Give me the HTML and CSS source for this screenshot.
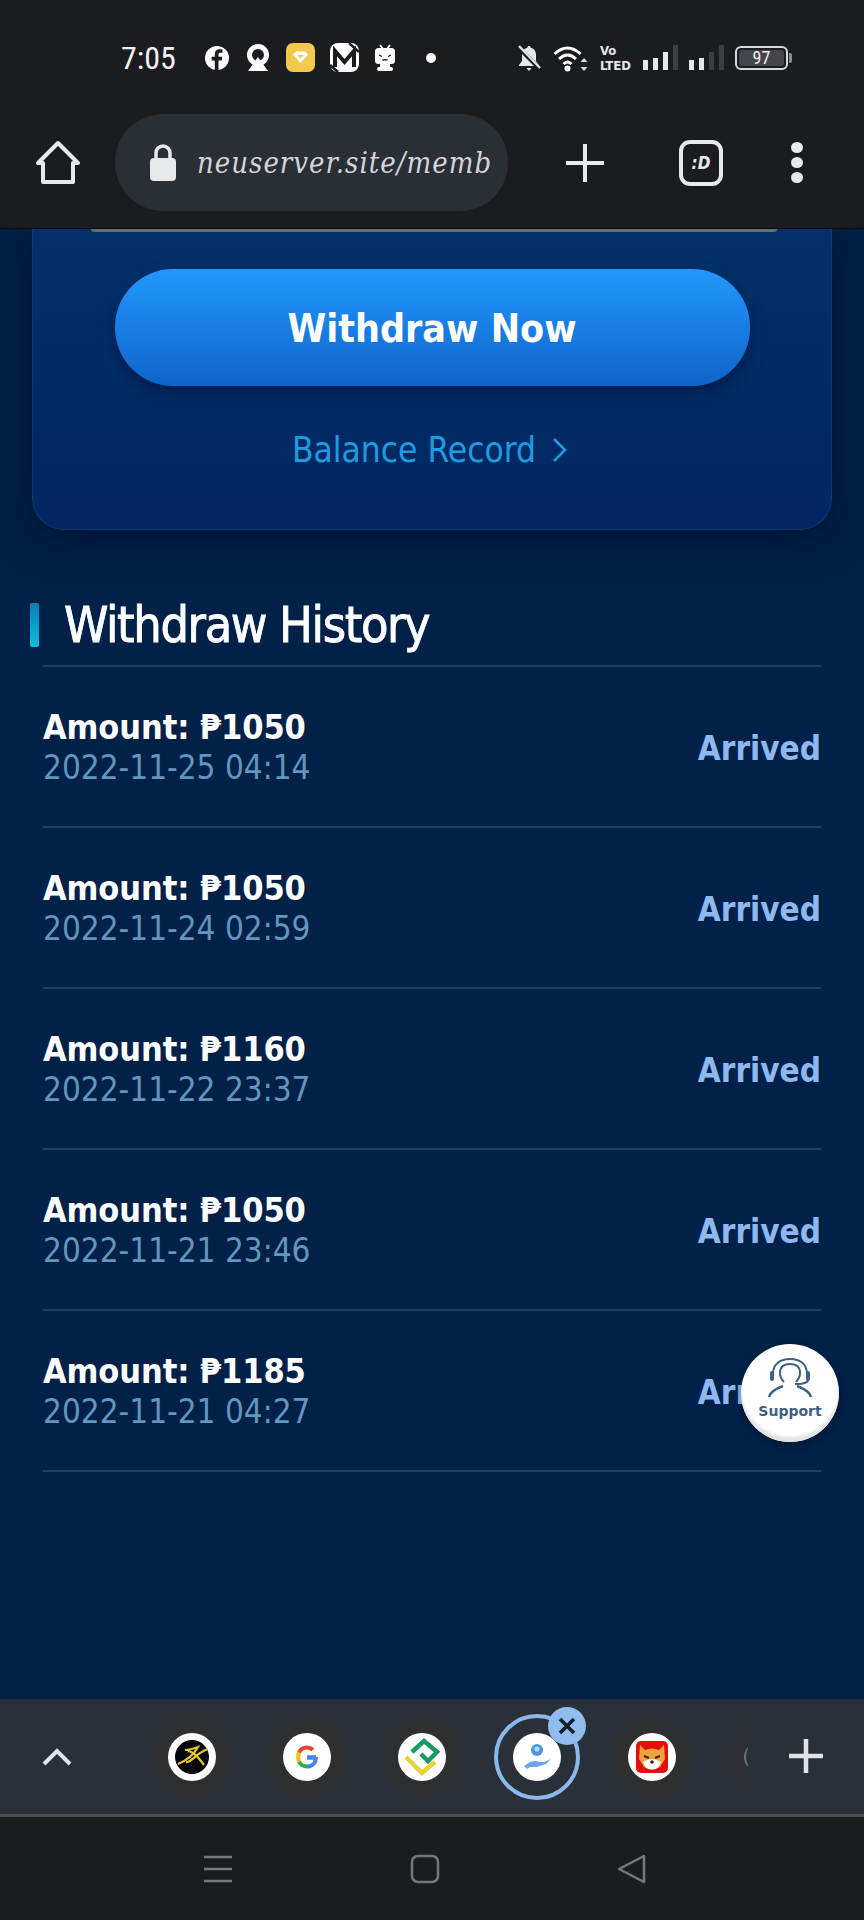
FILE: index.html
```html
<!DOCTYPE html>
<html lang="en">
<head>
  <meta charset="UTF-8" />
  <meta name="viewport" content="width=device-width, initial-scale=1.0"/>
  <title>Withdraw History</title>
  <link rel="stylesheet" href="styles.css">
</head>
<body>
  <div class="status-bar">
    <span class="clock">7:05</span>
    <div class="status-apps">
      <svg width="26" height="26" viewBox="0 0 26 26"><circle cx="13" cy="13" r="12" fill="#fff"/><path d="M14.500 25v-9.500h3.200l.5-3.700h-3.700V9.500c0-1.100.4-1.800 1.900-1.800h2V4.400c-.6-.1-1.700-.2-2.800-.2-2.900 0-4.800 1.700-4.800 4.800v2.800H7.600v3.700h3.200V25z" fill="#1b1c20"/></svg>
      <svg width="26" height="28" viewBox="0 0 26 28"><circle cx="13" cy="11" r="8.500" fill="none" stroke="#fff" stroke-width="5"/><path d="M13 13 23 27H3z" fill="#fff"/></svg>
      <svg width="29" height="29" viewBox="0 0 29 29"><rect width="29" height="29" rx="7" fill="#f2c94c"/><path d="M7 11.500 10 8.500h9l3 3-7.500 8.500z" fill="#fff"/><path d="M11 12h7l-3.500 3.500z" fill="#f2c94c"/></svg>
      <svg width="29" height="29" viewBox="0 0 29 29"><rect width="29" height="29" rx="8" fill="#fff"/><path d="M5 24V8l9.500 11L24 8v16" fill="none" stroke="#1b1c20" stroke-width="4"/><path d="M19 0 29 9M0 22l8 7" stroke="#1b1c20" stroke-width="2.500"/></svg>
      <svg width="22" height="27" viewBox="0 0 22 27"><path d="M6 1l3 4M16 1l-3 4" stroke="#fff" stroke-width="1.800"/><rect x="1" y="4" width="20" height="16" rx="3.500" fill="#fff"/><rect x="6" y="20" width="10" height="3" fill="#fff"/><rect x="3" y="23" width="16" height="4" rx="2" fill="#fff"/><path d="M5 11l3 1.500M17 11l-3 1.500M8.500 15.500q1.200 1 2.500 0q1.300 1 2.500 0" fill="none" stroke="#1b1c20" stroke-width="1.300"/></svg>
      <span class="status-dot"></span>
    </div>
    <div class="status-system">
      <svg width="26" height="28" viewBox="0 0 26 28"><path d="M13 2c-1 0-1.700.7-1.700 1.700C7.500 4.500 6 7.500 6 11v6l-3 4v1h20v-1l-3-4v-6c0-3.500-1.500-6.500-5.300-7.300C14.700 2.700 14 2 13 2z" fill="#e6e7ea"/><path d="M10.500 24h5l-2.500 3z" fill="#e6e7ea"/><path d="M2 3l22 22" stroke="#1b1c20" stroke-width="4.500"/><path d="M3 2l21 22" stroke="#e6e7ea" stroke-width="2.200"/></svg>
      <svg width="36" height="28" viewBox="0 0 36 28"><path d="M1.500 10q13-12 26 0M6 15q8.500-8 17 0M10.500 20q4-4 8 0" fill="none" stroke="#fff" stroke-width="3"/><circle cx="14.500" cy="24.500" r="3" fill="#fff"/><path d="M31 14l3.500 4h-7zM31 27l-3.500-4h7z" fill="#d9dadd"/></svg>
      <span class="volte">Vo<br>LTED</span>
      <svg width="35" height="26" viewBox="0 0 35 26"><rect x="0" y="15" width="5" height="10" fill="#e6e7ea"/><rect x="10" y="13" width="5" height="12" fill="#e6e7ea"/><rect x="20" y="7" width="5" height="18" fill="#e6e7ea"/><rect x="30" y="0" width="5" height="25" fill="#3c3e42"/></svg>
      <svg width="35" height="26" viewBox="0 0 35 26"><rect x="0" y="15" width="5" height="10" fill="#e6e7ea"/><rect x="10" y="13" width="5" height="12" fill="#e6e7ea"/><rect x="20" y="7" width="5" height="18" fill="#3c3e42"/><rect x="30" y="0" width="5" height="25" fill="#3c3e42"/></svg>
      <div class="battery"><span class="battery-level">97</span></div>
    </div>
  </div>

  <header class="toolbar">
    <svg class="home-icon" width="46" height="46" viewBox="0 0 46 46"><path d="M23 3 3 23h5v19h30V23h5z" fill="none" stroke="#e8e9ec" stroke-width="4" stroke-linejoin="round"/></svg>
    <div class="address">
      <svg class="lock-icon" width="28" height="38" viewBox="0 0 28 38"><path d="M7 16V9a7 7 0 0 1 14 0v7" fill="none" stroke="#e8e9ec" stroke-width="3.500"/><rect x="1" y="14" width="26" height="23" rx="4" fill="#e8e9ec"/></svg>
      <span class="url">neuserver.site/memb</span>
    </div>
    <svg class="add-icon" width="40" height="40" viewBox="0 0 40 40"><path d="M20 1v38M1 20h38" stroke="#e8e9ec" stroke-width="4"/></svg>
    <div class="tab-count">:D</div>
    <div class="menu-dots"><span></span><span></span><span></span></div>
  </header>

  <main class="page">
    <section class="wallet-card">
      <div class="field-edge"></div>
      <button class="withdraw-btn">Withdraw Now</button>
      <a class="balance-link">Balance Record
        <svg width="16" height="26" viewBox="0 0 16 26"><path d="M2 2l11 11L2 24" fill="none" stroke="#1f9be0" stroke-width="2.600"/></svg>
      </a>
    </section>

    <h2 class="section-title">Withdraw History</h2>

    <ul class="history">
      <li class="history-row">
        <div><div class="amount">Amount: ₱1050</div><div class="date">2022-11-25 04:14</div></div>
        <span class="state">Arrived</span>
      </li>
      <li class="history-row">
        <div><div class="amount">Amount: ₱1050</div><div class="date">2022-11-24 02:59</div></div>
        <span class="state">Arrived</span>
      </li>
      <li class="history-row">
        <div><div class="amount">Amount: ₱1160</div><div class="date">2022-11-22 23:37</div></div>
        <span class="state">Arrived</span>
      </li>
      <li class="history-row">
        <div><div class="amount">Amount: ₱1050</div><div class="date">2022-11-21 23:46</div></div>
        <span class="state">Arrived</span>
      </li>
      <li class="history-row">
        <div><div class="amount">Amount: ₱1185</div><div class="date">2022-11-21 04:27</div></div>
        <span class="state">Arrived</span>
      </li>
    </ul>

    <div class="support">
      <svg width="46" height="40" viewBox="0 0 46 40"><path d="M6 16C6 6 13 1 23 1s17 5 17 15" fill="none" stroke="#3d6082" stroke-width="2"/><rect x="3" y="13" width="4" height="10" rx="2" fill="#3d6082"/><rect x="39" y="13" width="4" height="10" rx="2" fill="#3d6082"/><path d="M13 15c0-6 4-9 10-9s10 3 10 9c0 4-2 7-4 9M17 24c-2-2-4-5-4-9M41 22c0 2-4 4-10 4h-3" fill="none" stroke="#3d6082" stroke-width="2"/><path d="M2 39c1-5 6-8 14-11M44 39c-1-5-6-8-14-11" fill="none" stroke="#3d6082" stroke-width="2.500"/></svg>
      <span class="support-label">Support</span>
    </div>
  </main>

  <div class="bubble-bar">
    <svg class="collapse-icon" width="30" height="20" viewBox="0 0 30 20"><path d="M2 17 15 4l13 13" fill="none" stroke="#e0e4ec" stroke-width="4"/></svg>
    <div class="bubbles">
      <div class="bubble">
        <svg width="48" height="48" viewBox="0 0 48 48"><circle cx="24" cy="24" r="24" fill="#fff"/><circle cx="24" cy="24" r="17" fill="#06060a"/><path d="M10 31q14-6 20-17q-8 3-13 3M18 29c6 1 8-8 22-13M20 18c6 1 10 6 16 14" fill="none" stroke="#e3c52c" stroke-width="2.200"/></svg>
      </div>
      <div class="bubble">
        <svg width="48" height="48" viewBox="0 0 48 48"><circle cx="24" cy="24" r="24" fill="#fff"/><path d="M33 24.500h-9" fill="none" stroke="#4285f4" stroke-width="4.500"/><path d="M33 24c0 6-4 9.500-9 9.500" fill="none" stroke="#4285f4" stroke-width="4"/><path d="M24 33.500c-3.700 0-6.600-2-8-5" fill="none" stroke="#34a853" stroke-width="4"/><path d="M16 28.500c-1.200-3-1.200-6 0-9" fill="none" stroke="#fbbc05" stroke-width="4"/><path d="M16 19.500c1.400-3 4.300-5 8-5 2.500 0 4.600.9 6 2.300" fill="none" stroke="#ea4335" stroke-width="4"/></svg>
      </div>
      <div class="bubble">
        <svg width="48" height="48" viewBox="0 0 48 48"><circle cx="24" cy="24" r="24" fill="#fff"/><path d="M14 19 26 8l13 11-9 9-7-7" fill="none" stroke="#1a9a62" stroke-width="4.500"/><path d="M8 24l16 16 13-11" fill="none" stroke="#e5d23a" stroke-width="4.500"/></svg>
      </div>
      <div class="bubble bubble-active">
        <svg width="48" height="48" viewBox="0 0 48 48"><circle cx="24" cy="24" r="24" fill="#fff"/><circle cx="24" cy="17" r="6" fill="#4a97ea"/><circle cx="24" cy="16" r="2.500" fill="#bcdcfa"/><path d="M11 33l6-4q6-2 9 0h5l7-3-5 5-9 3h-7l-3 2z" fill="#6ba6ea"/></svg>
        <span class="bubble-close"><svg width="20" height="20" viewBox="0 0 20 20"><path d="M3 3l14 14M17 3 3 17" stroke="#12202e" stroke-width="3.600"/></svg></span>
      </div>
      <div class="bubble">
        <svg width="48" height="48" viewBox="0 0 48 48"><circle cx="24" cy="24" r="24" fill="#fff"/><rect x="8" y="8" width="32" height="32" rx="5" fill="#e20f0c"/><path d="M12 12l5 5q7-3 14 0l5-5 1 14-5 8q-8 4-16 0l-5-8z" fill="#f2a23c"/><path d="M15 29q9-6 18 0l-3 6q-6 3-12 0z" fill="#fff"/><path d="M16 23l5 2M32 23l-5 2" stroke="#40200a" stroke-width="2"/><circle cx="24" cy="29" r="1.800" fill="#40200a"/></svg>
      </div>
      <div class="bubble bubble-cut"><span class="cut-edge"></span></div>
    </div>
    <svg class="bar-add" width="36" height="36" viewBox="0 0 36 36"><path d="M18 1v34M1 18h34" stroke="#e0e2e8" stroke-width="4.500"/></svg>
  </div>

  <nav class="nav-bar">
    <svg width="30" height="28" viewBox="0 0 30 28"><path d="M1 2h28M1 14h28M1 26h28" stroke="#77787c" stroke-width="2.500"/></svg>
    <svg width="30" height="30" viewBox="0 0 30 30"><rect x="2" y="2" width="26" height="26" rx="6" fill="none" stroke="#77787c" stroke-width="2.500"/></svg>
    <svg width="30" height="30" viewBox="0 0 30 30"><path d="M2 15 27 2v26z" fill="none" stroke="#77787c" stroke-width="2.500" stroke-linejoin="round"/></svg>
  </nav>
</body>
</html>
```

FILE: styles.css
```css
* {
  box-sizing: border-box;
}

body {
  margin: 0;
  width: 864px;
  height: 1920px;
  display: flex;
  flex-direction: column;
  overflow: hidden;
  background: #1b1c20;
  font-family: 'DejaVu Sans Condensed', 'DejaVu Sans', sans-serif;
  font-stretch: condensed;
  color: #fff;
}

/* status bar */
.status-bar {
  height: 113px;
  padding: 43px 76px 0 121px;
  display: flex;
  align-items: flex-start;
  flex-shrink: 0;
}

.clock {
  font-family: Roboto, sans-serif;
  font-size: 32px;
  line-height: 30px;
  width: 83px;
  color: #f2f2f2;
}

.status-apps {
  display: flex;
  align-items: center;
  gap: 15px;
  height: 29px;
}

.status-dot {
  width: 10px;
  height: 10px;
  margin-left: 15px;
  border-radius: 50%;
  background: #fff;
}

.status-system {
  margin-left: auto;
  display: flex;
  align-items: center;
  gap: 11px;
  height: 29px;
}

.volte {
  font-size: 13px;
  line-height: 15px;
  font-weight: bold;
  color: #e6e7ea;
  width: 32px;
}

.battery {
  width: 53px;
  height: 24px;
  border: 2px solid #d8d9dc;
  border-radius: 6px;
  padding: 2px;
  position: relative;
}

.battery::after {
  content: '';
  position: absolute;
  right: -6px;
  top: 5px;
  width: 3px;
  height: 10px;
  background: #8b8c90;
  border-radius: 0 2px 2px 0;
}

.battery-level {
  display: block;
  height: 16px;
  background: #44464b;
  border-radius: 3px;
  font-family: Roboto, sans-serif;
  font-size: 18px;
  line-height: 16px;
  text-align: center;
  color: #eee;
}

/* browser toolbar */
.toolbar {
  height: 116px;
  padding: 0 58px 16px 35px;
  display: flex;
  align-items: center;
  flex-shrink: 0;
  border-bottom: 1px solid #0c0d10;
}

.home-icon {
  flex-shrink: 0;
}

.address {
  width: 393px;
  height: 97px;
  margin-left: 34px;
  padding: 0 18px 0 34px;
  display: flex;
  align-items: center;
  gap: 20px;
  background: #2a2e35;
  border-radius: 48px;
  overflow: hidden;
}

.lock-icon {
  flex-shrink: 0;
}

.url {
  min-width: 0;
  font-family: 'DejaVu Serif Condensed', 'DejaVu Serif', serif;
  font-style: italic;
  font-size: 29px;
  letter-spacing: 1px;
  white-space: nowrap;
  overflow: hidden;
  color: #d3d5da;
}

.add-icon {
  margin-left: 57px;
  flex-shrink: 0;
}

.tab-count {
  width: 44px;
  height: 46px;
  margin-left: 74px;
  border: 4px solid #e8e9ec;
  border-radius: 11px;
  font-size: 17px;
  font-weight: bold;
  font-style: italic;
  line-height: 38px;
  text-align: center;
  flex-shrink: 0;
  color: #e8e9ec;
}

.menu-dots {
  margin-left: 68px;
  display: flex;
  flex-direction: column;
  gap: 4px;
}

.menu-dots span {
  width: 12px;
  height: 11px;
  border-radius: 50%;
  background: #e8e9ec;
}

/* page */
.page {
  flex: 1;
  position: relative;
  overflow: hidden;
  background: #012148;
}

.wallet-card {
  margin: 0 32px;
  height: 301px;
  padding-top: 40px;
  display: flex;
  flex-direction: column;
  align-items: center;
  background: linear-gradient(to bottom, #023269, #012762);
  border: 1px solid #0d3a70;
  border-top: none;
  border-radius: 0 0 32px 32px;
  box-shadow: 0 6px 40px rgba(0, 8, 30, 0.6);
  position: relative;
}

.field-edge {
  position: absolute;
  top: 0;
  left: 58px;
  right: 54px;
  height: 3px;
  background: #5a7468;
  border-radius: 0 0 6px 6px;
}

.withdraw-btn {
  width: 635px;
  height: 117px;
  padding: 2px 0 0;
  border: none;
  border-radius: 58px;
  background: linear-gradient(to bottom, #2198ff, #0f64c8);
  box-shadow: 0 8px 16px rgba(0, 15, 60, 0.5);
  font-family: inherit;
  font-size: 39px;
  font-weight: bold;
  font-stretch: condensed;
  color: #fff;
}

.balance-link {
  margin-top: 42px;
  margin-right: 4px;
  display: flex;
  align-items: center;
  gap: 16px;
  font-size: 35px;
  line-height: 44px;
  color: #1f9be0;
}

.section-title {
  margin: 63px 0 0;
  padding-left: 64px;
  height: 64px;
  display: flex;
  align-items: center;
  font-size: 50px;
  letter-spacing: -1.4px;
  font-weight: normal;
  -webkit-text-stroke: 0.8px #fff;
  position: relative;
}

.section-title::before {
  content: '';
  position: absolute;
  left: 30px;
  top: 10px;
  width: 9px;
  height: 44px;
  border-radius: 2px;
  background: linear-gradient(to bottom, #0a7fb8, #12bde0);
}

.history {
  list-style: none;
  margin: 8px 43px 0;
  padding: 0;
  border-top: 2px solid #1b3f66;
}

.history-row {
  height: 161px;
  display: flex;
  align-items: center;
  justify-content: space-between;
  border-bottom: 2px solid #1b3f66;
}

.amount {
  font-size: 34px;
  font-weight: bold;
  line-height: 42px;
  letter-spacing: -0.1px;
}

.date {
  font-size: 33px;
  line-height: 40px;
  color: #6296bf;
}

.state {
  padding-top: 3px;
  font-size: 33px;
  font-weight: bold;
  color: #8db8f2;
}

.support {
  position: absolute;
  left: 741px;
  top: 1115px;
  width: 98px;
  height: 98px;
  border-radius: 50%;
  background: #fff;
  box-shadow: inset 0 -5px 3px #e3e3e3, 0 3px 8px rgba(0, 0, 0, 0.3);
  display: flex;
  flex-direction: column;
  align-items: center;
  gap: 4px;
  padding-top: 14px;
}

.support-label {
  font-family: 'DejaVu Sans', sans-serif;
  font-stretch: normal;
  font-size: 14px;
  font-weight: bold;
  line-height: 18px;
  color: #3d6082;
}

/* bubbles */
.bubble-bar {
  height: 118px;
  flex-shrink: 0;
  display: flex;
  align-items: center;
  position: relative;
  background: #2a3038;
  border-bottom: 3px solid #4a4d50;
}

.collapse-icon {
  margin-left: 42px;
}

.bubbles {
  margin-left: 80px;
  display: flex;
  gap: 35px;
  width: 620px;
  overflow: visible;
}

.bubble {
  width: 80px;
  height: 80px;
  flex-shrink: 0;
  border-radius: 50%;
  background: #2e2f31;
  display: flex;
  align-items: center;
  justify-content: center;
  position: relative;
}

.bubble-active {
  background: transparent;
  border: 4px solid #8ab8ec;
  width: 86px;
  height: 86px;
  margin: -3px;
}

.bubble-close {
  position: absolute;
  left: 50px;
  top: -11px;
  width: 38px;
  height: 38px;
  border-radius: 50%;
  background: #8fbdee;
  display: flex;
  align-items: center;
  justify-content: center;
}

.bubble-cut {
  clip-path: inset(0 74% 0 0);
  background: #2c2f33;
}

.cut-edge {
  position: absolute;
  left: 17px;
  top: 25px;
  width: 30px;
  height: 30px;
  border-left: 2px solid #6b6e72;
  border-radius: 50%;
}

.bar-add {
  position: absolute;
  left: 788px;
  top: 39px;
}

/* system nav */
.nav-bar {
  flex: 0 0 103px;
  display: flex;
  align-items: center;
  padding: 0 217px 0 203px;
  justify-content: space-between;
  background: #1b1c20;
}
```
